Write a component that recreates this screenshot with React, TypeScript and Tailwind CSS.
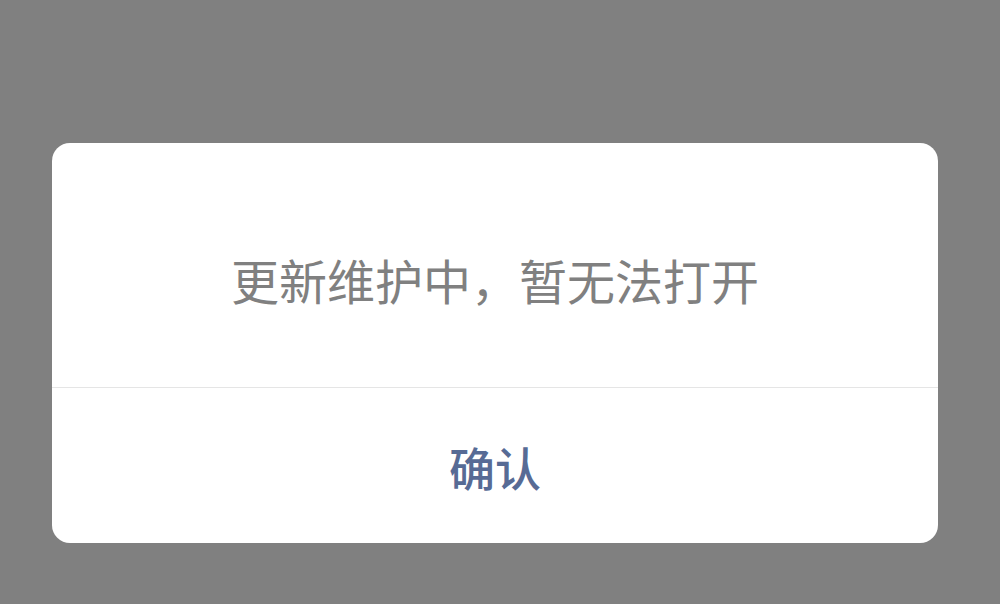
export default function App() {
  return (
    <div className="flex h-[604px] w-[1000px] flex-col bg-[#808080] pt-[143px] pl-[52px]">
      <div className="flex w-[886px] flex-col overflow-hidden rounded-[18px] bg-white">
        <div className="flex h-[245px] items-center justify-center border-b border-[#e5e5e5] pt-[28px]">
          <p
            className="text-[48px] leading-none text-[#808080]"
            style={{ fontFamily: '"Noto Sans CJK SC", sans-serif' }}
          >
            更新维护中，暂无法打开
          </p>
        </div>
        <button
          type="button"
          className="flex h-[155px] items-center justify-center text-[46px] font-medium leading-none text-[#576b95]"
          style={{ fontFamily: '"Noto Sans CJK SC", sans-serif' }}
        >
          确认
        </button>
      </div>
    </div>
  );
}
